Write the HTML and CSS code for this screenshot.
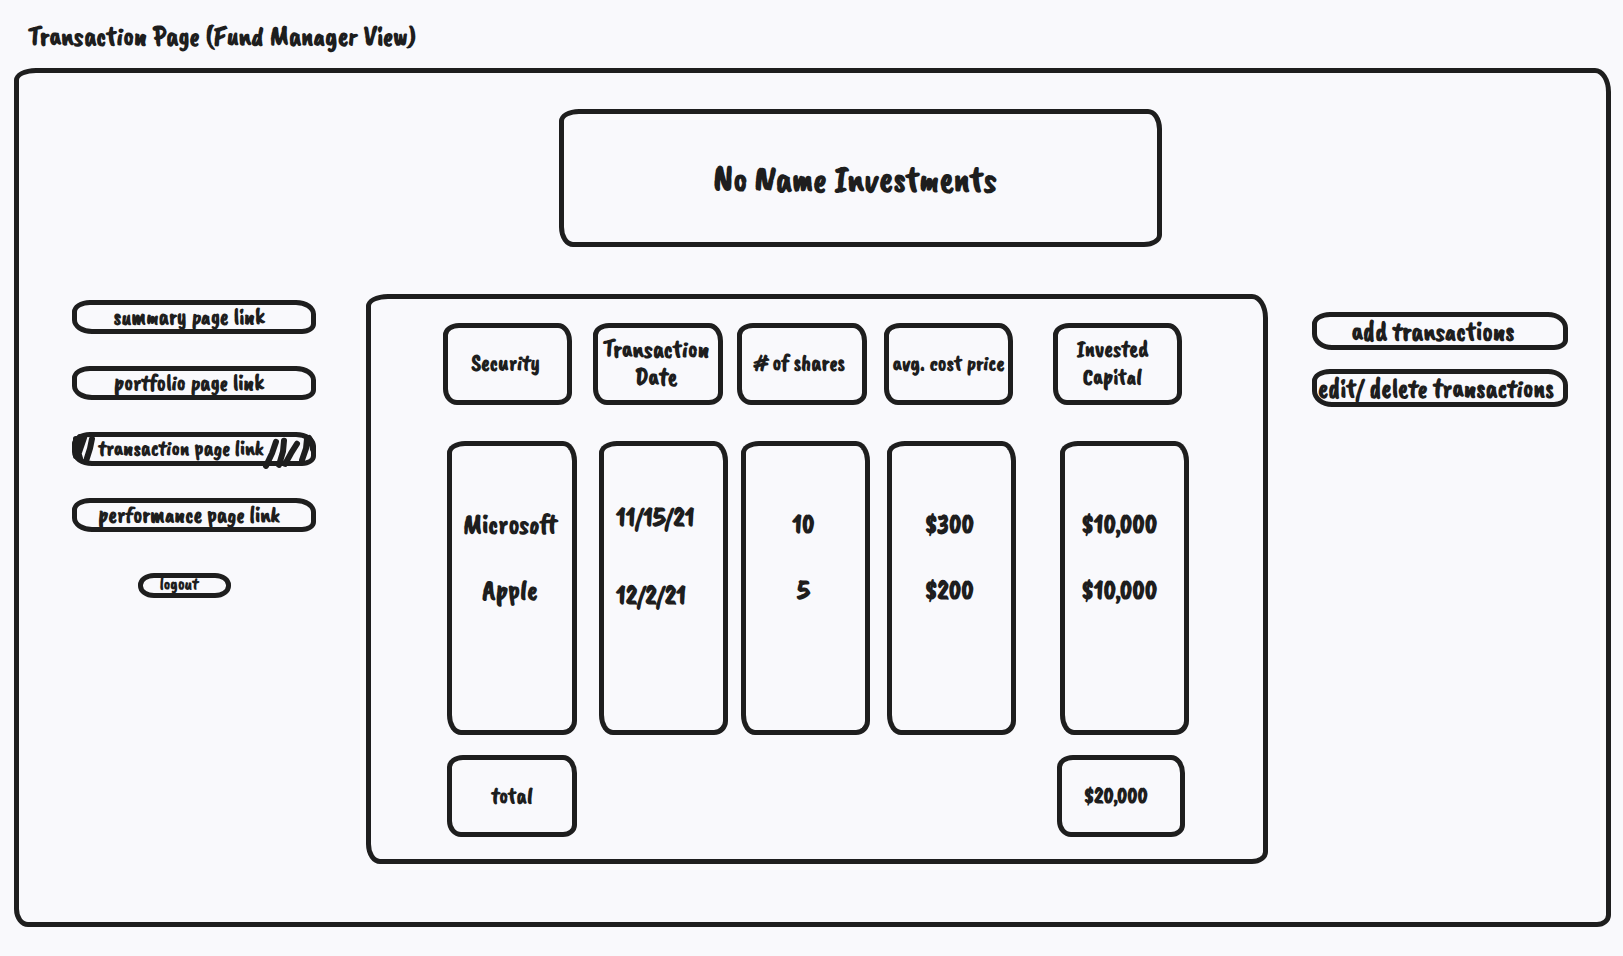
FILE: index.html
```
<!DOCTYPE html>
<html lang="en">
<head>
<meta charset="utf-8">
<title>Transaction Page (Fund Manager View)</title>
<link rel="stylesheet" href="styles.css">
</head>
<body>
<h1 class="page-title">Transaction Page (Fund Manager View)</h1>
<main class="frame">
  <header class="banner"><h2 class="banner-name">No Name Investments</h2></header>
  <div class="content">
    <nav class="links" aria-label="Pages">
      <a class="link" href="#summary">summary page link</a>
      <a class="link" href="#portfolio">portfolio page link</a>
      <a class="link link-active" href="#transaction" aria-current="page">transaction page link
        <svg class="hatch" viewBox="0 0 244 35" preserveAspectRatio="none" aria-hidden="true">
          <path d="M4 7L5 22M8 5L4 25M12 6L6 24M6 20L8 27M20 7L18 17L14 30M204 10L200 22L194 35M212 9L211 20L207 34M225 12L219 22L213 33M235 7L234 17L230 29M237 6L240 12L241 18"/>
        </svg>
      </a>
      <a class="link" href="#performance">performance page link</a>
      <button class="logout" type="button">logout</button>
    </nav>
    <section class="panel">
      <table class="ledger">
        <thead>
          <tr class="row row-head">
            <th scope="col">Security</th>
            <th scope="col" class="large">Transaction<br>Date</th>
            <th scope="col"># of shares</th>
            <th scope="col" class="small">avg. cost price</th>
            <th scope="col" class="shift">Invested<br>Capital</th>
          </tr>
        </thead>
        <tbody>
          <tr class="row row-first">
            <td>Microsoft</td><td class="date">11/15/21</td><td>10</td><td>$300</td><td class="shift">$10,000</td>
          </tr>
          <tr class="row row-last">
            <td>Apple</td><td class="date">12/2/21</td><td>5</td><td>$200</td><td class="shift">$10,000</td>
          </tr>
        </tbody>
        <tfoot>
          <tr class="row row-total">
            <th scope="row">total</th><td class="shift">$20,000</td>
          </tr>
        </tfoot>
      </table>
    </section>
    <div class="actions">
      <button class="action" type="button">add transactions</button>
      <button class="action action-wide" type="button">edit/ delete transactions</button>
    </div>
  </div>
</main>
</body>
</html>
```
FILE: styles.css
```
:root {
  --ink: #1e1e1e;
  --paper: #f9f9fc;
  --line: 5px solid var(--ink);
  --box-radius: 16px 14px 14px 14px / 12px 18px 12px 16px;
}
* { box-sizing: border-box; }
body {
  margin: 0;
  padding: 18px 12px 28px 14px;
  background: var(--paper);
  color: var(--ink);
  font-family: "Caveat Brush", "Liberation Sans Narrow", "Liberation Sans", sans-serif;
  font-weight: 700;
}
button { font: inherit; color: inherit; background: none; cursor: pointer; }
.page-title { margin: 0 0 14px 14px; font-size: 28px; line-height: 36px; }
.frame {
  border: var(--line);
  border-radius: 22px 16px 14px 14px / 12px 24px 12px 18px;
  padding: 36px 0 58px;
}
.banner {
  display: flex;
  align-items: center;
  justify-content: center;
  width: 38%;
  min-height: 138px;
  margin-left: 34%;
  padding: 2px 10px 0 0;
  border: var(--line);
  border-radius: 20px 14px 18px 14px / 12px 20px 12px 20px;
}
.banner-name { margin: 0; font-size: 37px; line-height: 44px; white-space: nowrap; }
.content {
  display: grid;
  grid-template-columns: minmax(0, 250fr) minmax(0, 902fr) minmax(0, 256fr);
  gap: 44px;
  padding: 47px 38px 0 53px;
}
.links { display: flex; flex-direction: column; gap: 32px; padding: 6px 6px 0 0; }
.link, .logout, .action {
  display: flex;
  align-items: center;
  justify-content: center;
  border: var(--line);
  white-space: nowrap;
}
.link {
  position: relative;
  height: 34px;
  padding: 0 10px 2px 0;
  border-radius: 18px 20px 14px 20px / 12px 14px 10px 14px;
  color: inherit;
  font-size: 23px;
  line-height: 25px;
  text-decoration: none;
}
.link-active { padding-right: 26px; font-size: 22px; }
.hatch {
  position: absolute;
  inset: -5px;
  width: calc(100% + 10px);
  height: calc(100% + 10px);
  overflow: visible;
  fill: none;
  stroke: var(--ink);
  stroke-width: 6;
  stroke-linecap: round;
  stroke-linejoin: round;
}
.logout {
  align-self: center;
  width: 93px;
  height: 25px;
  margin: 9px 20px 0 0;
  padding: 0 10px 4px 0;
  border-radius: 16px / 12px;
  font-size: 17px;
  line-height: 16px;
}
.panel {
  border: var(--line);
  border-radius: 22px 16px 16px 14px / 12px 24px 12px 20px;
  padding: 24px 74px 22px 72px;
}
.ledger, .ledger thead, .ledger tbody, .ledger tfoot { display: block; }
.row { display: grid; font-size: 23px; line-height: 28px; }
.row > * {
  display: flex;
  align-items: center;
  justify-content: center;
  min-width: 0;
  padding: 0;
  border: var(--line);
  border-radius: var(--box-radius);
  text-align: center;
  white-space: nowrap;
}
.row > :nth-child(2) { grid-column: 3; }
.row > :nth-child(3) { grid-column: 5; }
.row > :nth-child(4) { grid-column: 7; }
.row > :nth-child(5) { grid-column: 9; }
.row > .shift { padding-right: 10px; }
.row-head {
  grid-template-columns: 129fr 21fr 130fr 14fr 130fr 17fr 129fr 40fr 129fr;
  min-height: 82px;
  margin: 0 7px 36px 0;
}
.row-head > * { padding: 0 4px 2px 0; }
.row-head .large { font-size: 25px; }
.row-head .small { padding-right: 0; font-size: 22px; }
.row-first, .row-last {
  grid-template-columns: 130fr 22fr 129fr 13fr 129fr 17fr 129fr 44fr 129fr;
  margin-left: 4px;
  font-size: 28px;
  line-height: 32px;
}
.row-first > *, .row-last > * { align-items: flex-start; }
.row-first > * {
  min-height: 118px;
  padding: 62px 4px 0 0;
  border-bottom: 0;
  border-radius: 18px 14px 0 0 / 12px 20px 0 0;
}
.row-last > * {
  min-height: 176px;
  padding: 15px 4px 0 0;
  border-top: 0;
  border-radius: 0 0 14px 14px / 0 0 14px 20px;
}
.row-first .date, .row-last .date { justify-content: flex-start; padding-left: 12px; }
.row-first .date { padding-top: 55px; }
.row-last .date { padding-top: 20px; }
.row-total {
  grid-template-columns: 130fr 480fr 128fr;
  min-height: 82px;
  margin: 20px 4px 0 4px;
}
.actions { display: flex; flex-direction: column; gap: 19px; padding-top: 18px; }
.action {
  height: 38px;
  padding: 0 14px 0 0;
  border-radius: 18px 20px 14px 20px / 12px 16px 10px 16px;
  font-size: 27px;
  line-height: 28px;
}
.action-wide { padding: 0 8px 0 0; }
```
